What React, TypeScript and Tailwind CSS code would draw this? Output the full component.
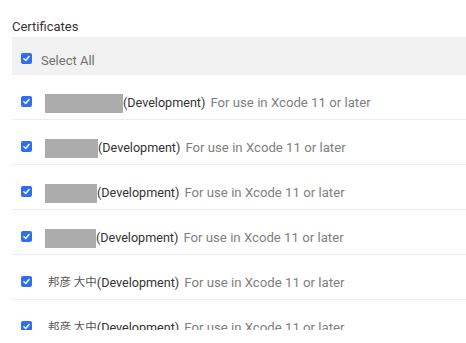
const rows = [
  { mask: 78 },
  { mask: 53 },
  { mask: 52 },
  { mask: 51 },
  { name: "邦彦 大中" },
  { name: "邦彦 大中" },
];

const Check = () => (
  <span className="flex h-[11px] w-[11px] shrink-0 items-center justify-center rounded-[2px] bg-[#2f6ef0]">
    <svg viewBox="0 0 12 12" className="h-[9px] w-[9px]">
      <path d="M2.6 6.3 L5 8.6 L9.4 3.4" fill="none" stroke="#fff" strokeWidth="2" strokeLinecap="round" strokeLinejoin="round" />
    </svg>
  </span>
);

const App = () => {
  return (
    <div className="h-[343px] w-[466px] overflow-hidden bg-white pl-3 text-[13px] font-['Roboto','Noto_Sans_CJK_JP',sans-serif]">
      <div className="pt-[19px] pb-[2px] leading-[16px] text-[#333]">Certificates</div>
      <div className="flex h-[38px] items-center gap-[9px] bg-[#f2f2f2] pl-[9px] pt-[9px] text-[#707070]">
        <div className="-mt-[4px]">
          <Check />
        </div>
        <span>Select All</span>
      </div>
      <div className="h-[255px] overflow-hidden">
        {rows.map((r, i) => (
          <div key={i} className="flex h-[45px] items-center border-b border-[#ececec] pl-[9px] pt-[12px]">
            <div className="-mt-[3px]">
              <Check />
            </div>
            {r.mask ? (
              <span className="ml-[13px] h-[19px] bg-[#acacac]" style={{ width: r.mask }} />
            ) : (
              <span className="ml-[16px] text-[11.5px] text-[#555]">{r.name}</span>
            )}
            <span className="text-[12.6px] text-[#333]">(Development)</span>
            <span className="ml-[5px] text-[13.2px] text-[#808080]">For use in Xcode 11 or later</span>
          </div>
        ))}
      </div>
    </div>
  );
};

export default App;
